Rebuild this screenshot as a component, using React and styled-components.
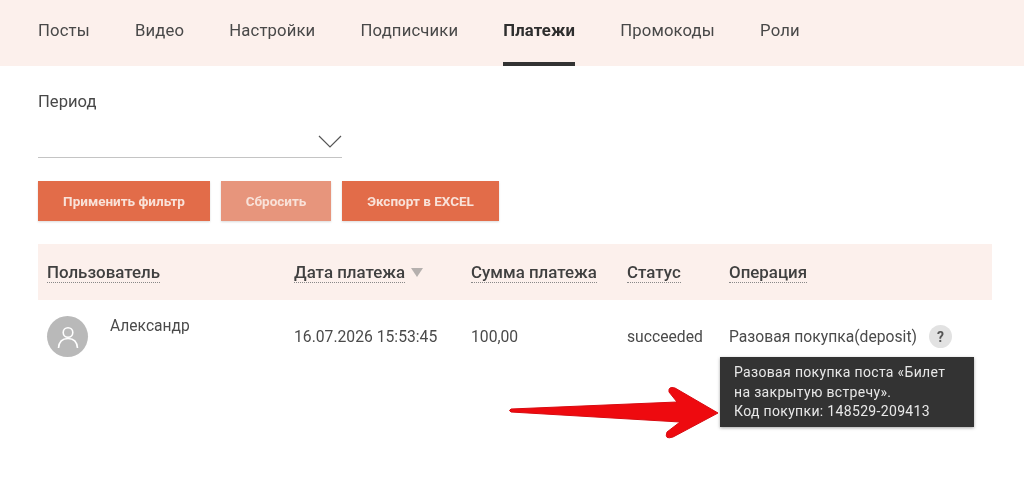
import React from "react";
import styled, { createGlobalStyle } from "styled-components";

const tabs = ["Посты", "Видео", "Настройки", "Подписчики", "Платежи", "Промокоды", "Роли"];

const columns = [
	{ title: "Пользователь" },
	{ title: "Дата платежа", sorted: true },
	{ title: "Сумма платежа" },
	{ title: "Статус" },
	{ title: "Операция" },
];

function App() {
	return (
		<Page>
			<GlobalStyle />
			<Nav>
				{tabs.map((tab) => (
					<Tab key={tab} $active={tab === "Платежи"}>
						{tab}
					</Tab>
				))}
			</Nav>
			<Content>
				<FilterLabel>Период</FilterLabel>
				<Select>
					<svg width="24" height="13" viewBox="0 0 24 13" fill="none">
						<path d="M1 1 L12 12 L23 1" stroke="#555" strokeWidth="1.2" />
					</svg>
				</Select>
				<Actions>
					<ActionButton $width={172}>Применить фильтр</ActionButton>
					<ActionButton $width={110} $muted>
						Сбросить
					</ActionButton>
					<ActionButton $width={157}>Экспорт в EXCEL</ActionButton>
				</Actions>
				<Table>
					<HeadRow>
						{columns.map((col) => (
							<HeadCell key={col.title}>
								<HeadTitle>{col.title}</HeadTitle>
								{col.sorted && <SortMark />}
							</HeadCell>
						))}
					</HeadRow>
					<BodyRow>
						<UserCell>
							<Avatar>
								<svg width="26" height="26" viewBox="0 0 26 26" fill="none">
									<circle cx="13" cy="8.5" r="4.8" stroke="#fff" strokeWidth="1.6" />
									<path d="M3.5 24 C4 17.5 8 14.5 13 14.5 C18 14.5 22 17.5 22.5 24" stroke="#fff" strokeWidth="1.6" />
								</svg>
							</Avatar>
							<UserName>Александр</UserName>
						</UserCell>
						<BodyCell>16.07.2026 15:53:45</BodyCell>
						<BodyCell>100,00</BodyCell>
						<BodyCell>succeeded</BodyCell>
						<BodyCell>
							Разовая покупка(deposit)
							<Help>?</Help>
						</BodyCell>
						<Tooltip>
							Разовая покупка поста «Билет
							<br />
							на закрытую встречу».
							<br />
							Код покупки: 148529-209413
						</Tooltip>
					</BodyRow>
				</Table>
			</Content>
			<Arrow width="214" height="56" viewBox="0 0 214 56">
				<path
					d="M3 23 L169 16 L161 6 Q160 0 167 2 L210 27 L165 51 Q156 54 159 46 L172 36 L3 26 Q0 24.5 3 23 Z"
					fill="#ee0a0f"
					stroke="#d80a10"
					strokeWidth="1"
				/>
			</Arrow>
		</Page>
	);
}

export default App;

const GlobalStyle = createGlobalStyle`
	html, body {
		margin: 0;
		padding: 0;
		background: #fff;
	}
	body {
		font-family: Roboto, "Liberation Sans", sans-serif;
		color: #444;
	}
`;

const Page = styled.div`
	position: relative;
	width: 1024px;
	height: 486px;
	overflow: hidden;
	background: #fff;
	filter: blur(0.45px);
`;

const Nav = styled.nav`
	display: flex;
	gap: 45.2px;
	height: 66px;
	padding-left: 38px;
	background: #fcf0ec;
`;

const Tab = styled.div`
	height: 66px;
	box-sizing: border-box;
	padding-top: 21px;
	font-size: 16.7px;
	line-height: 19px;
	letter-spacing: 0.13px;
	font-weight: ${(props) => (props.$active ? 700 : 400)};
	color: ${(props) => (props.$active ? "#2e2e2e" : "#484848")};
	border-bottom: 4px solid ${(props) => (props.$active ? "#333" : "transparent")};
`;

const Content = styled.div`
	padding: 27px 32px 0 38px;
`;

const FilterLabel = styled.div`
	font-size: 16.6px;
	line-height: 18px;
	color: #484848;
`;

const Select = styled.div`
	display: flex;
	justify-content: flex-end;
	align-items: flex-start;
	box-sizing: border-box;
	width: 304px;
	height: 32px;
	margin-top: 15px;
	padding: 9px 0 0;
	border-bottom: 1.5px solid #c4c4c4;
`;

const Actions = styled.div`
	display: flex;
	gap: 11px;
	margin-top: 23px;
`;

const ActionButton = styled.div`
	display: flex;
	align-items: center;
	justify-content: center;
	width: ${(props) => props.$width}px;
	height: 40px;
	background: ${(props) => (props.$muted ? "#e7957c" : "#e26c49")};
	color: #f9e2d9;
	font-size: 13.5px;
	font-weight: 700;
	box-shadow: 0 1px 2px rgba(0, 0, 0, 0.15);
`;

const Table = styled.div`
	margin-top: 23px;
	width: 954px;
`;

const gridColumns = "247px 177px 156px 102px 1fr";

const HeadRow = styled.div`
	display: grid;
	grid-template-columns: ${gridColumns};
	align-items: center;
	height: 56px;
	padding-left: 9px;
	box-sizing: border-box;
	background: #fcf0ec;
`;

const HeadCell = styled.div`
	display: flex;
	align-items: center;
	gap: 6px;
`;

const HeadTitle = styled.span`
	font-size: 16.9px;
	line-height: 20px;
	font-weight: 500;
	color: #404040;
	border-bottom: 1px dotted #888;
`;

const SortMark = styled.span`
	width: 0;
	height: 0;
	border-left: 6px solid transparent;
	border-right: 6px solid transparent;
	border-top: 9px solid #b5b0ae;
`;

const BodyRow = styled.div`
	position: relative;
	display: grid;
	grid-template-columns: ${gridColumns};
	align-items: center;
	height: 73px;
	padding-left: 9px;
	box-sizing: border-box;
`;

const BodyCell = styled.div`
	display: flex;
	align-items: center;
	font-size: 15.7px;
	line-height: 18px;
	color: #4a4a4a;
	white-space: nowrap;
`;

const UserCell = styled.div`
	display: flex;
	align-items: flex-start;
	gap: 22px;
`;

const Avatar = styled.div`
	display: flex;
	align-items: center;
	justify-content: center;
	width: 41px;
	height: 41px;
	border-radius: 50%;
	background: #b9b9b9;
`;

const UserName = styled.div`
	font-size: 15.6px;
	line-height: 18px;
	color: #4a4a4a;
	margin-top: 1px;
`;

const Help = styled.span`
	display: flex;
	align-items: center;
	justify-content: center;
	width: 23px;
	height: 23px;
	margin-left: 12px;
	border-radius: 50%;
	background: #e2e2e2;
	color: #555;
	font-size: 14px;
	font-weight: 700;
`;

const Tooltip = styled.div`
	position: absolute;
	left: 682px;
	top: 57px;
	width: 254px;
	height: 70px;
	box-sizing: border-box;
	padding: 6px 14px;
	background: #333;
	color: #e8e8e8;
	font-size: 14px;
	line-height: 19.5px;
	letter-spacing: 0.33px;
	white-space: nowrap;
	box-shadow: 0 1px 3px rgba(0, 0, 0, 0.35);
`;

const Arrow = styled.svg`
	position: absolute;
	left: 508px;
	top: 386px;
`;
